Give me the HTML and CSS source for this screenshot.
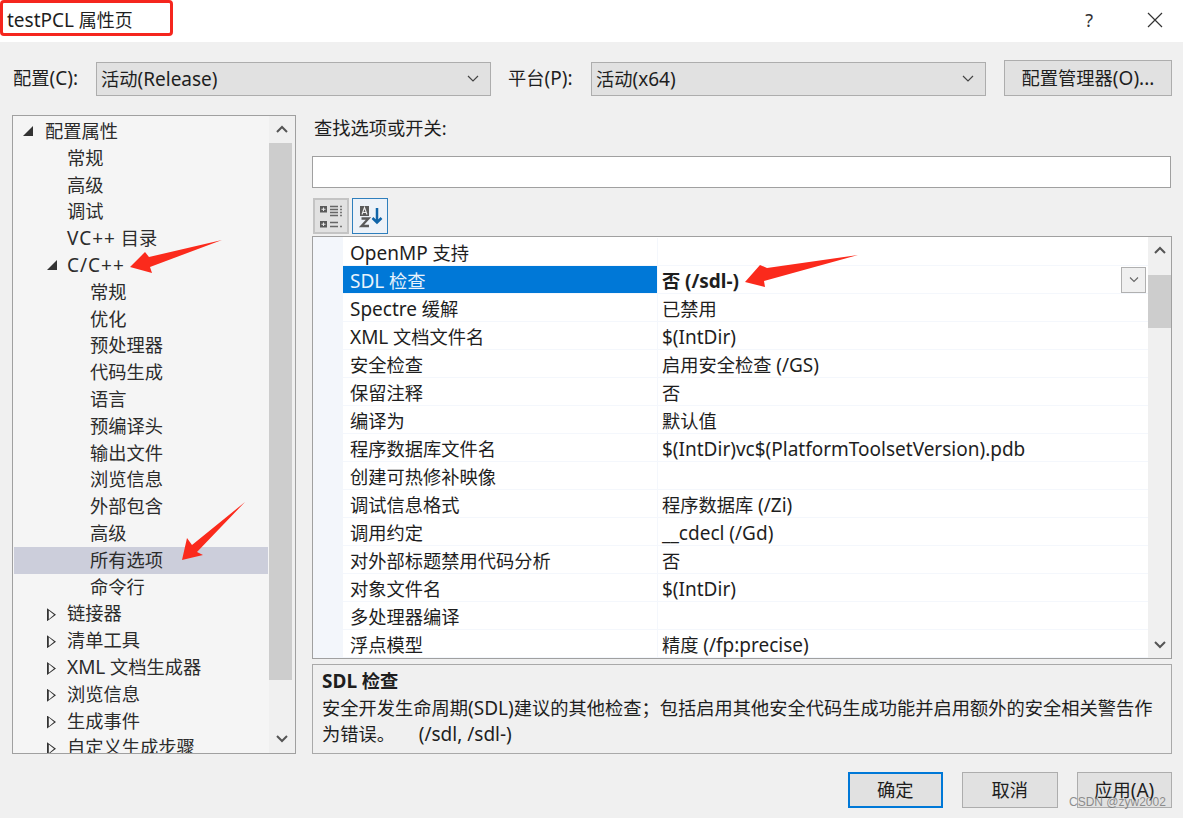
FILE: index.html
```html
<!DOCTYPE html>
<html lang="zh">
<head>
<meta charset="utf-8">
<title>testPCL 属性页</title>
<link rel="stylesheet" href="styles.css">
</head>
<body>
<div class="dialog">
  <header class="titlebar">
    <span class="title"><span class="la">testPCL</span> 属性页</span>
    <div class="title-actions">
      <span class="help">?</span>
      <svg class="close" width="16" height="16" viewBox="0 0 16 16"><path d="M1 1L15 15M15 1L1 15" stroke="#333" stroke-width="1.2" fill="none"/></svg>
    </div>
  </header>
  <div class="content">
    <div class="config-row">
      <span class="cfg-label cfg-label-a">配置<span class="la">(C):</span></span>
      <div class="combo combo-a"><span>活动<span class="la">(Release)</span></span><svg width="12" height="8" viewBox="0 0 12 8"><path d="M1 1L6 6L11 1" stroke="#444" stroke-width="1.2" fill="none"/></svg></div>
      <span class="cfg-label cfg-label-b">平台<span class="la">(P):</span></span>
      <div class="combo combo-b"><span>活动<span class="la">(x64)</span></span><svg width="12" height="8" viewBox="0 0 12 8"><path d="M1 1L6 6L11 1" stroke="#444" stroke-width="1.2" fill="none"/></svg></div>
      <button class="btn btn-manager">配置管理器<span class="la">(O)...</span></button>
    </div>
    <div class="main">
      <div class="tree">
        <div class="tree-list">
          <div class="node l0"><i class="tw open"></i>配置属性</div>
          <div class="node l1">常规</div>
          <div class="node l1">高级</div>
          <div class="node l1">调试</div>
          <div class="node l1"><span class="la plus">VC++</span> 目录</div>
          <div class="node l1e"><i class="tw open"></i><span class="la plus">C/C++</span></div>
          <div class="node l2">常规</div>
          <div class="node l2">优化</div>
          <div class="node l2">预处理器</div>
          <div class="node l2">代码生成</div>
          <div class="node l2">语言</div>
          <div class="node l2">预编译头</div>
          <div class="node l2">输出文件</div>
          <div class="node l2">浏览信息</div>
          <div class="node l2">外部包含</div>
          <div class="node l2">高级</div>
          <div class="node l2 selected">所有选项</div>
          <div class="node l2">命令行</div>
          <div class="node l1e"><i class="tw closed"></i>链接器</div>
          <div class="node l1e"><i class="tw closed"></i>清单工具</div>
          <div class="node l1e"><i class="tw closed"></i><span class="la">XML</span> 文档生成器</div>
          <div class="node l1e"><i class="tw closed"></i>浏览信息</div>
          <div class="node l1e"><i class="tw closed"></i>生成事件</div>
          <div class="node l1e"><i class="tw closed"></i>自定义生成步骤</div>
        </div>
        <div class="vscroll tree-scroll">
          <svg class="sb-btn" width="14" height="9" viewBox="0 0 14 9"><path d="M2 7L7 2L12 7" stroke="#555" stroke-width="2" fill="none"/></svg>
          <div class="thumb"></div>
          <svg class="sb-btn" width="14" height="9" viewBox="0 0 14 9"><path d="M2 2L7 7L12 2" stroke="#555" stroke-width="2" fill="none"/></svg>
        </div>
      </div>
      <div class="right">
        <div class="search-label">查找选项或开关:</div>
        <div class="search-input"></div>
        <div class="toolbar">
          <div class="tool">
            <svg width="26" height="26" viewBox="0 0 26 26"><rect x="2" y="3" width="7" height="6.500" fill="#5a5a5a"/><rect x="2" y="18" width="7" height="6.500" fill="#5a5a5a"/><path d="M3.500 6.250h4M5.500 4.500v3.500M3.500 21.250h4M5.500 19.500v3.500" stroke="#e8e8e8"/><path d="M12 3.500h8M12 6.500h8M12 9.500h8M12 12.500h8M12 19.500h8M12 23.500h8" stroke="#666" stroke-width="1.500"/><path d="M22 3.500h2M22 6.500h2M22 9.500h2M22 12.500h2M22 23.500h2" stroke="#777" stroke-width="1.500"/></svg>
          </div>
          <div class="tool tool-on">
            <svg width="26" height="26" viewBox="0 0 26 26"><rect x="3" y="3" width="9" height="10" fill="#5a5a5a"/><path d="M5 11.500L7.500 4.500L10 11.500M5.800 9.500h3.400" stroke="#eee" stroke-width="1.100" fill="none"/><path d="M4.500 15.500h7L4.500 23h7.500" stroke="#5a5a5a" stroke-width="2.300" fill="none"/><path d="M20 5v14.500M15.500 15L20 19.500L24.500 15" stroke="#0f64a8" stroke-width="2.500" fill="none"/></svg>
          </div>
        </div>
        <div class="grid">
          <div class="gutter"></div>
          <div class="rows">
            <div class="row"><div class="name"><span class="la">OpenMP</span> 支持</div><div class="val"></div></div>
            <div class="row active"><div class="name"><span class="la">SDL</span> 检查</div><div class="val strong">否 <span class="la">(/sdl-)</span><span class="drop"><svg width="12" height="8" viewBox="0 0 12 8"><path d="M2 1.500L6 5.500L10 1.500" stroke="#666" stroke-width="1.100" fill="none"/></svg></span></div></div>
            <div class="row"><div class="name"><span class="la">Spectre</span> 缓解</div><div class="val">已禁用</div></div>
            <div class="row"><div class="name"><span class="la">XML</span> 文档文件名</div><div class="val"><span class="la">$(IntDir)</span></div></div>
            <div class="row"><div class="name">安全检查</div><div class="val">启用安全检查 <span class="la">(/GS)</span></div></div>
            <div class="row"><div class="name">保留注释</div><div class="val">否</div></div>
            <div class="row"><div class="name">编译为</div><div class="val">默认值</div></div>
            <div class="row"><div class="name">程序数据库文件名</div><div class="val"><span class="la">$(IntDir)vc$(PlatformToolsetVersion).pdb</span></div></div>
            <div class="row"><div class="name">创建可热修补映像</div><div class="val"></div></div>
            <div class="row"><div class="name">调试信息格式</div><div class="val">程序数据库 <span class="la">(/Zi)</span></div></div>
            <div class="row"><div class="name">调用约定</div><div class="val"><span class="la">__cdecl (/Gd)</span></div></div>
            <div class="row"><div class="name">对外部标题禁用代码分析</div><div class="val">否</div></div>
            <div class="row"><div class="name">对象文件名</div><div class="val"><span class="la">$(IntDir)</span></div></div>
            <div class="row"><div class="name">多处理器编译</div><div class="val"></div></div>
            <div class="row"><div class="name">浮点模型</div><div class="val">精度 <span class="la">(/fp:precise)</span></div></div>
          </div>
          <div class="vscroll grid-scroll">
            <svg class="sb-btn" width="14" height="9" viewBox="0 0 14 9"><path d="M2 7L7 2L12 7" stroke="#555" stroke-width="2" fill="none"/></svg>
            <div class="thumb"></div>
            <svg class="sb-btn" width="14" height="9" viewBox="0 0 14 9"><path d="M2 2L7 7L12 2" stroke="#555" stroke-width="2" fill="none"/></svg>
          </div>
        </div>
        <div class="desc">
          <div class="desc-title"><span class="la">SDL</span> 检查</div>
          <div class="desc-text">安全开发生命周期<span class="la">(SDL)</span>建议的其他检查；包括启用其他安全代码生成功能并启用额外的安全相关警告作<br>为错误。&nbsp;&nbsp;&nbsp;&nbsp; <span class="la">(/sdl, /sdl-)</span></div>
        </div>
      </div>
    </div>
    <div class="footer">
      <button class="btn btn-foot btn-default">确定</button>
      <button class="btn btn-foot">取消</button>
      <button class="btn btn-foot">应用<span class="la">(A)</span></button>
    </div>
  </div>
</div>
<div class="redbox"></div>
<svg class="arrows" width="1183" height="818" viewBox="0 0 1183 818">
  <path fill="#fb2a1c" d="M222 240L149 257L145 252L130 267L152 273L150 267Z"/>
  <path fill="#fb2a1c" d="M858 255L767 268L760 265L745 282L765 287L764 281Z"/>
  <path fill="#fb2a1c" d="M245 502L192 545L187 538L182 560L203 555L197 552Z"/>
</svg>
<div class="watermark">CSDN @zyw2002</div>
</body>
</html>
```
FILE: styles.css
```css
* { box-sizing: border-box; }
html, body { margin: 0; padding: 0; }
body {
  width: 1183px;
  height: 818px;
  overflow: hidden;
  position: relative;
  background: #f0f0f0;
  color: #1e1e1e;
  font-family: "Noto Sans", "Noto Sans CJK SC", sans-serif;
  font-size: 18.25px;
  line-height: 24px;
}
.la { font-size: 19px; }
.plus { letter-spacing: 1px; }
.dialog { width: 1183px; height: 818px; display: flex; flex-direction: column; }
.titlebar {
  height: 42px;
  background: #fff;
  display: flex;
  align-items: center;
  justify-content: space-between;
  padding: 0 20px 2px 7px;
  flex: none;
}
.title { font-size: 18px; }
.title-actions { display: flex; align-items: center; gap: 54px; }
.help { font-size: 18px; color: #333; }
.close { display: block; }
.content { flex: 1; display: flex; flex-direction: column; padding: 18px 11px 0 12px; }
.config-row { display: flex; align-items: center; height: 36px; flex: none; }
.cfg-label { flex: none; }
.cfg-label-a { width: 84px; padding-left: 1px; }
.cfg-label-b { width: 100px; padding-left: 17px; }
.combo {
  height: 34px;
  width: 395px;
  margin-top: 1px;
  background: #e1e1e1;
  border: 1px solid #adadad;
  display: flex;
  align-items: center;
  justify-content: space-between;
  padding: 0 11px 0 4px;
  flex: none;
}
.btn {
  font: inherit;
  color: inherit;
  background: #e1e1e1;
  border: 1px solid #adadad;
  padding: 0;
  height: 36px;
}
.btn-manager { width: 168px; margin-left: 18px; flex: none; }
.main { display: flex; margin-top: 19px; height: 639px; flex: none; }
.tree {
  width: 284px;
  height: 639px;
  border: 1px solid #a0a0a0;
  background: #f5f5f5;
  display: flex;
  flex: none;
}
.tree-list { flex: 1; padding: 2px 1px 0 1px; overflow: hidden; min-width: 0; }
.node { height: 26.8px; line-height: 26.8px; white-space: nowrap; position: relative; color: #2c2c2c; }
.l0 { padding-left: 31px; }
.l1, .l1e { padding-left: 53px; }
.l2 { padding-left: 76px; }
.selected { background: #cccedb; }
.tw { position: absolute; display: block; width: 0; height: 0; }
.l0 .tw { left: 9px; top: 8px; }
.l1e .tw { left: 33px; top: 8px; }
.tw.open { width: 10px; height: 10px; background: #333; clip-path: polygon(100% 0, 100% 100%, 0 100%); }
.tw.closed { width: 9px; height: 13px; background: #333; clip-path: polygon(0 0, 100% 50%, 0 100%, 0 0, 20% 16%, 20% 84%, 78% 50%, 20% 16%); }
.vscroll { flex: none; display: flex; flex-direction: column; align-items: center; background: #f0f0f0; }
.tree-scroll { width: 26px; }
.tree-scroll .sb-btn { margin: 9px 0 9px; flex: none; }
.tree-scroll .sb-btn:last-child { margin: 0; }
.tree-scroll .thumb { width: 23px; height: 537px; margin-bottom: 54px; background: #cdcdcd; align-self: flex-start; }
.right { flex: 1; min-width: 0; margin-left: 16px; display: flex; flex-direction: column; }
.search-label { height: 41px; padding: 0 0 0 2px; line-height: 26px; }
.search-input { height: 33px; width: 859px; background: #fff; border: 1px solid #a0a0a0; }
.toolbar { display: flex; gap: 3px; margin-top: 10px; padding-left: 1px; height: 37px; }
.tool {
  width: 36px;
  height: 36px;
  background: #e1e1e1;
  border: 2px solid #c4c4c4;
  display: flex;
  align-items: center;
  justify-content: center;
}
.tool-on { background: #edf2f8; border: 1px solid #2f7fbd; }
.grid {
  margin-top: 1px;
  height: 423px;
  width: 860px;
  border: 1px solid #a0a0a0;
  background: #fff;
  display: flex;
  overflow: hidden;
  flex: none;
}
.gutter { width: 30px; flex: none; background: #f3f6fb; }
.rows { flex: 1; min-width: 0; overflow: hidden; padding-top: 1px; }
.row { display: flex; height: 28px; line-height: 27px; border-bottom: 1px solid #f4f7fc; white-space: nowrap; }
.name { width: 315px; padding: 1px 0 0 7px; border-right: 1px solid #f4f7fc; flex: none; }
.val { flex: 1; padding: 1px 0 0 4px; position: relative; min-width: 0; }
.active .name { background: #0078d7; color: #e8f3fc; }
.strong { font-weight: 700; }
.drop {
  position: absolute;
  right: 2px;
  top: 1px;
  width: 25px;
  height: 26px;
  background: #f0f0f0;
  border: 1px solid #b0b0b0;
  display: flex;
  align-items: center;
  justify-content: center;
}
.grid-scroll { width: 23px; }
.grid-scroll .sb-btn { margin: 9px 0 20px; flex: none; }
.grid-scroll .sb-btn:last-child { margin: 0; }
.grid-scroll .thumb { width: 23px; height: 53px; margin-bottom: 312px; background: #cdcdcd; }
.desc {
  margin-top: 5px;
  height: 90px;
  width: 860px;
  border: 1px solid #a9a9a9;
  padding: 2px 8px 0 9px;
  flex: none;
}
.desc-title { font-weight: 700; height: 28px; line-height: 27px; }
.desc-text { line-height: 26px; white-space: nowrap; }
.footer { display: flex; justify-content: flex-end; gap: 19px; margin-top: 18px; flex: none; }
.btn-foot { width: 95.5px; }
.btn-default { border: 2px solid #0078d7; }
.redbox {
  position: absolute;
  left: 0;
  top: 0;
  width: 173px;
  height: 36px;
  border: 3px solid #f5261e;
  border-radius: 4px;
}
.arrows { position: absolute; left: 0; top: 0; pointer-events: none; }
.watermark {
  position: absolute;
  left: 1069px;
  top: 793px;
  font-size: 12px;
  line-height: 18px;
  font-family: "Liberation Sans", sans-serif;
  color: rgba(110, 110, 110, 0.75);
  white-space: nowrap;
}
```
